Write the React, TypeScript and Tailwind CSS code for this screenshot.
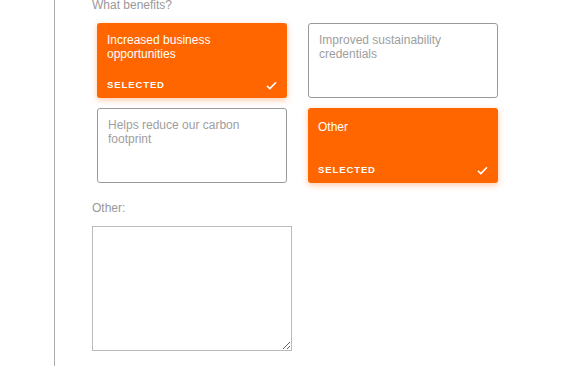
import React from "react";

function Check() {
  return (
    <svg width="11" height="9" viewBox="0 0 11 9" fill="none">
      <path d="M1 4.8 L3.9 7.6 L10 1.2" stroke="white" strokeWidth="1.6" />
    </svg>
  );
}

function Card({ label, selected, lower }: { label: string; selected?: boolean; lower?: boolean }) {
  if (selected) {
    return (
      <div
        className={
          lower
            ? "flex h-[75px] w-[190px] flex-col justify-between rounded-[3px] bg-[#ff6600] px-[10px] pb-[7px] pt-[12px] text-white shadow-[0_2px_6px_rgba(255,102,0,0.35)]"
            : "flex h-[75px] w-[190px] flex-col justify-between rounded-[3px] bg-[#ff6600] px-[10px] pb-[7px] pt-[10px] text-white shadow-[0_2px_6px_rgba(255,102,0,0.35)]"
        }
      >
        <div className="text-[12px] leading-[14px]">{label}</div>
        <div className="flex items-center justify-between">
          <span className="text-[9.5px] font-bold leading-[12px] tracking-[0.9px]">SELECTED</span>
          <Check />
        </div>
      </div>
    );
  }
  return (
    <div className="h-[75px] w-[190px] rounded-[3px] border border-[#999999] bg-white px-[10px] pt-[9px] text-[12px] leading-[14px] text-[#9e9e9e]">
      {label}
    </div>
  );
}

export default function App() {
  return (
    <div className="flex h-[366px] w-[564px] overflow-hidden bg-white font-['Liberation_Sans',Arial,sans-serif]">
      <div className="ml-[54px] h-full w-px bg-[#aaaaaa]" />
      <div className="ml-[37px] flex flex-col">
        <div className="-mt-[2px] text-[12px] leading-[14px] text-[#999999]">What benefits?</div>
        <div className="ml-[5px] mt-[11px] grid grid-cols-[190px_190px] gap-x-[21px] gap-y-[10px]">
          <Card label="Increased business opportunities" selected />
          <Card label="Improved sustainability credentials" />
          <Card label="Helps reduce our carbon footprint" />
          <Card label="Other" selected lower />
        </div>
        <div className="mt-[18px] text-[12px] leading-[14px] text-[#999999]">Other:</div>
        <textarea className="mt-[11px] h-[125px] w-[200px] border border-[#bbbbbb] bg-white outline-none" />
      </div>
    </div>
  );
}
